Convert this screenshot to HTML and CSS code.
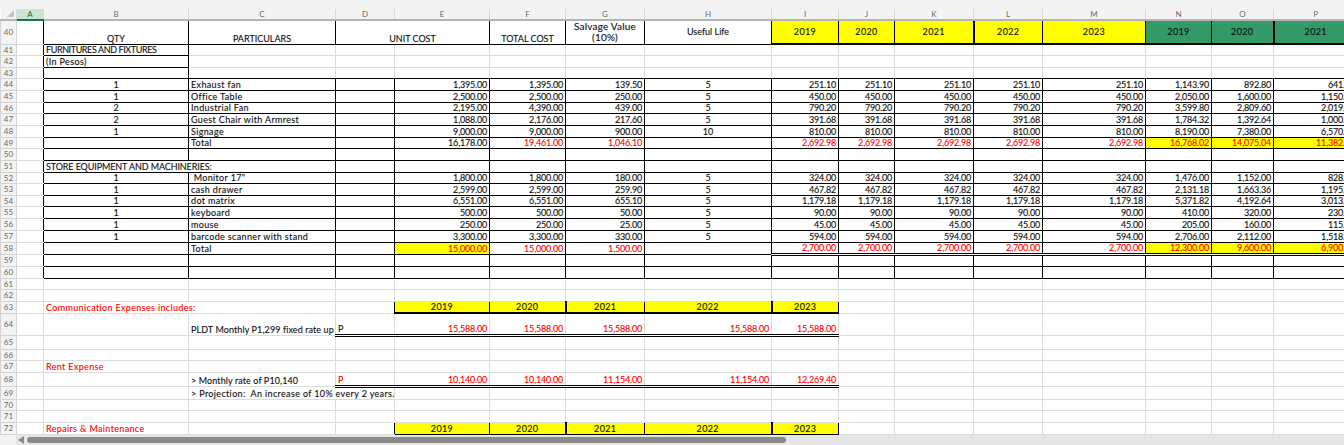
FILE: index.html
```html
<!DOCTYPE html>
<html lang="en">
<head>
    <meta charset="UTF-8">
    <title>Depreciation Schedule</title>
    <link rel="stylesheet" href="styles.css">
</head>
<body>
<div class="sheet">
    <div class="strip"></div>
    <div class="grid-wrap">
        <table class="grid">
            <colgroup>
                <col class="c-rh"><col class="c-a"><col class="c-b"><col class="c-c"><col class="c-d"><col class="c-e"><col class="c-f"><col class="c-g"><col class="c-h"><col class="c-i"><col class="c-j"><col class="c-k"><col class="c-l"><col class="c-m"><col class="c-n"><col class="c-o"><col class="c-p">
            </colgroup>
            <thead>
                <tr class="letters">
                    <th class="corner"><span class="tri"></span></th>
                    <th class="sel">A</th><th>B</th><th>C</th><th>D</th><th>E</th><th>F</th><th>G</th><th>H</th><th>I</th><th>J</th><th>K</th><th>L</th><th>M</th><th>N</th><th>O</th><th>P</th>
                </tr>
            </thead>
            <tbody>
                <tr class="h24 edge box head"><th>40</th><td></td><td class="mid">QTY</td><td class="mid">PARTICULARS</td><td class="mid" colspan="2">UNIT COST</td><td class="mid">TOTAL COST</td><td class="mid top">Salvage Value<br>(10%)</td><td class="mid cen">Useful Life</td><td class="yr yel">2019</td><td class="yr yel">2020</td><td class="yr yel">2021</td><td class="yr yel tl">2022</td><td class="yr yel">2023</td><td class="yr grn">2019</td><td class="yr grn">2020</td><td class="yr grn tl">2021</td></tr>
                <tr class="h11 edge"><th>41</th><td></td><td class="blk tight">FURNITURES AND FIXTURES</td><td></td><td></td><td></td><td></td><td></td><td></td><td></td><td></td><td></td><td></td><td></td><td></td><td></td><td></td></tr>
                <tr class="h12 edge"><th>42</th><td></td><td class="blk">(In Pesos)</td><td></td><td></td><td></td><td></td><td></td><td></td><td></td><td></td><td></td><td></td><td></td><td></td><td></td><td></td></tr>
                <tr class="h11 edge base"><th>43</th><td></td><td class="blk"></td><td></td><td></td><td></td><td></td><td></td><td></td><td></td><td></td><td></td><td></td><td></td><td></td><td></td><td></td></tr>
                <tr class="h12 edge box"><th>44</th><td></td><td class="mid">1</td><td>Exhaust fan</td><td></td><td class="n">1,395.00</td><td class="n">1,395.00</td><td class="n">139.50</td><td class="mid">5</td><td class="n">251.10</td><td class="n">251.10</td><td class="n">251.10</td><td class="n">251.10</td><td class="n">251.10</td><td class="n">1,143.90</td><td class="n">892.80</td><td class="n">641.70</td></tr>
                <tr class="h12 edge box"><th>45</th><td></td><td class="mid">1</td><td>Office Table</td><td></td><td class="n">2,500.00</td><td class="n">2,500.00</td><td class="n">250.00</td><td class="mid">5</td><td class="n">450.00</td><td class="n">450.00</td><td class="n">450.00</td><td class="n">450.00</td><td class="n">450.00</td><td class="n">2,050.00</td><td class="n">1,600.00</td><td class="n">1,150.00</td></tr>
                <tr class="h11 edge box"><th>46</th><td></td><td class="mid">2</td><td>Industrial Fan</td><td></td><td class="n">2,195.00</td><td class="n">4,390.00</td><td class="n">439.00</td><td class="mid">5</td><td class="n">790.20</td><td class="n">790.20</td><td class="n">790.20</td><td class="n">790.20</td><td class="n">790.20</td><td class="n">3,599.80</td><td class="n">2,809.60</td><td class="n">2,019.40</td></tr>
                <tr class="h12 edge box"><th>47</th><td></td><td class="mid">2</td><td>Guest Chair with Armrest</td><td></td><td class="n">1,088.00</td><td class="n">2,176.00</td><td class="n">217.60</td><td class="mid">5</td><td class="n">391.68</td><td class="n">391.68</td><td class="n">391.68</td><td class="n">391.68</td><td class="n">391.68</td><td class="n">1,784.32</td><td class="n">1,392.64</td><td class="n">1,000.96</td></tr>
                <tr class="h12 edge box"><th>48</th><td></td><td class="mid">1</td><td>Signage</td><td></td><td class="n">9,000.00</td><td class="n">9,000.00</td><td class="n">900.00</td><td class="mid">10</td><td class="n">810.00</td><td class="n">810.00</td><td class="n">810.00</td><td class="n">810.00</td><td class="n">810.00</td><td class="n">8,190.00</td><td class="n">7,380.00</td><td class="n">6,570.00</td></tr>
                <tr class="h11 edge box"><th>49</th><td></td><td></td><td>Total</td><td></td><td class="n">16,178.00</td><td class="n red">19,461.00</td><td class="n red">1,046.10</td><td></td><td class="n red">2,692.98</td><td class="n red">2,692.98</td><td class="n red">2,692.98</td><td class="n red">2,692.98</td><td class="n red">2,692.98</td><td class="n red yel">16,768.02</td><td class="n red yel">14,075.04</td><td class="n red yel">11,382.06</td></tr>
                <tr class="h12 edge box"><th>50</th><td></td><td></td><td></td><td></td><td></td><td></td><td></td><td></td><td></td><td></td><td></td><td></td><td></td><td></td><td></td><td></td></tr>
                <tr class="h12 edge box"><th>51</th><td></td><td class="caps" colspan="2">STORE EQUIPMENT AND MACHINERIES:</td><td></td><td></td><td></td><td></td><td></td><td></td><td></td><td></td><td></td><td></td><td></td><td></td><td></td></tr>
                <tr class="h11 edge box"><th>52</th><td></td><td class="mid">1</td><td>&nbsp;Monitor 17"</td><td></td><td class="n">1,800.00</td><td class="n">1,800.00</td><td class="n">180.00</td><td class="mid">5</td><td class="n">324.00</td><td class="n">324.00</td><td class="n">324.00</td><td class="n">324.00</td><td class="n">324.00</td><td class="n">1,476.00</td><td class="n">1,152.00</td><td class="n">828.00</td></tr>
                <tr class="h12 edge box"><th>53</th><td></td><td class="mid">1</td><td>cash drawer</td><td></td><td class="n">2,599.00</td><td class="n">2,599.00</td><td class="n">259.90</td><td class="mid">5</td><td class="n">467.82</td><td class="n">467.82</td><td class="n">467.82</td><td class="n">467.82</td><td class="n">467.82</td><td class="n">2,131.18</td><td class="n">1,663.36</td><td class="n">1,195.54</td></tr>
                <tr class="h11 edge box"><th>54</th><td></td><td class="mid">1</td><td>dot matrix</td><td></td><td class="n">6,551.00</td><td class="n">6,551.00</td><td class="n">655.10</td><td class="mid">5</td><td class="n">1,179.18</td><td class="n">1,179.18</td><td class="n">1,179.18</td><td class="n">1,179.18</td><td class="n">1,179.18</td><td class="n">5,371.82</td><td class="n">4,192.64</td><td class="n">3,013.46</td></tr>
                <tr class="h12 edge box"><th>55</th><td></td><td class="mid">1</td><td>keyboard</td><td></td><td class="n">500.00</td><td class="n">500.00</td><td class="n">50.00</td><td class="mid">5</td><td class="n">90.00</td><td class="n">90.00</td><td class="n">90.00</td><td class="n">90.00</td><td class="n">90.00</td><td class="n">410.00</td><td class="n">320.00</td><td class="n">230.00</td></tr>
                <tr class="h12 edge box"><th>56</th><td></td><td class="mid">1</td><td>mouse</td><td></td><td class="n">250.00</td><td class="n">250.00</td><td class="n">25.00</td><td class="mid">5</td><td class="n">45.00</td><td class="n">45.00</td><td class="n">45.00</td><td class="n">45.00</td><td class="n">45.00</td><td class="n">205.00</td><td class="n">160.00</td><td class="n">115.00</td></tr>
                <tr class="h12 edge box"><th>57</th><td></td><td class="mid">1</td><td>barcode scanner with stand</td><td></td><td class="n">3,300.00</td><td class="n">3,300.00</td><td class="n">330.00</td><td class="mid">5</td><td class="n">594.00</td><td class="n">594.00</td><td class="n">594.00</td><td class="n">594.00</td><td class="n">594.00</td><td class="n">2,706.00</td><td class="n">2,112.00</td><td class="n">1,518.00</td></tr>
                <tr class="h11 edge box"><th>58</th><td></td><td></td><td>Total</td><td></td><td class="n red yel">15,000.00</td><td class="n red">15,000.00</td><td class="n red">1,500.00</td><td></td><td class="n red dbl">2,700.00</td><td class="n red dbl">2,700.00</td><td class="n red dbl">2,700.00</td><td class="n red dbl">2,700.00</td><td class="n red dbl">2,700.00</td><td class="n red yel dbl">12,300.00</td><td class="n red yel dbl">9,600.00</td><td class="n red yel dbl">6,900.00</td></tr>
                <tr class="h12 edge box"><th>59</th><td></td><td></td><td></td><td></td><td></td><td></td><td></td><td></td><td></td><td></td><td></td><td></td><td></td><td></td><td></td><td></td></tr>
                <tr class="h12 edge box"><th>60</th><td></td><td></td><td></td><td></td><td></td><td></td><td></td><td></td><td></td><td></td><td></td><td></td><td></td><td></td><td></td><td></td></tr>
                <tr class="h11"><th>61</th><td></td><td></td><td></td><td></td><td></td><td></td><td></td><td></td><td></td><td></td><td></td><td></td><td></td><td></td><td></td><td></td></tr>
                <tr class="h12"><th>62</th><td></td><td></td><td></td><td></td><td></td><td></td><td></td><td></td><td></td><td></td><td></td><td></td><td></td><td></td><td></td><td></td></tr>
                <tr class="h12"><th>63</th><td></td><td class="red" colspan="2">Communication Expenses includes:</td><td class="rb"></td><td class="tab yel">2019</td><td class="tab yel">2020</td><td class="tab yel tl">2021</td><td class="tab yel">2022</td><td class="tab yel tl">2023</td><td></td><td></td><td></td><td></td><td></td><td></td><td></td></tr>
                <tr class="h22"><th>64</th><td></td><td></td><td class="snug">PLDT Monthly P1,299 fixed rate up</td><td class="dbl">P</td><td class="n red dbl">15,588.00</td><td class="n red dbl">15,588.00</td><td class="n red dbl">15,588.00</td><td class="n red dbl">15,588.00</td><td class="n red dbl">15,588.00</td><td></td><td></td><td></td><td></td><td></td><td></td><td></td></tr>
                <tr class="h14"><th>65</th><td></td><td></td><td></td><td></td><td></td><td></td><td></td><td></td><td></td><td></td><td></td><td></td><td></td><td></td><td></td><td></td></tr>
                <tr class="h11"><th>66</th><td></td><td></td><td></td><td></td><td></td><td></td><td></td><td></td><td></td><td></td><td></td><td></td><td></td><td></td><td></td><td></td></tr>
                <tr class="h12"><th>67</th><td></td><td class="red">Rent Expense</td><td></td><td></td><td></td><td></td><td></td><td></td><td></td><td></td><td></td><td></td><td></td><td></td><td></td><td></td></tr>
                <tr class="h14"><th>68</th><td></td><td></td><td class="snug">&gt; Monthly rate of P10,140</td><td class="red dbl">P</td><td class="n red dbl">10,140.00</td><td class="n red dbl">10,140.00</td><td class="n red dbl">11,154.00</td><td class="n red dbl">11,154.00</td><td class="n red dbl">12,269.40</td><td></td><td></td><td></td><td></td><td></td><td></td><td></td></tr>
                <tr class="h13"><th>69</th><td></td><td></td><td colspan="2">&gt; Projection:&nbsp; An increase of 10% every 2 years.</td><td></td><td></td><td></td><td></td><td></td><td></td><td></td><td></td><td></td><td></td><td></td><td></td></tr>
                <tr class="h11"><th>70</th><td></td><td></td><td></td><td></td><td></td><td></td><td></td><td></td><td></td><td></td><td></td><td></td><td></td><td></td><td></td><td></td></tr>
                <tr class="h12"><th>71</th><td></td><td></td><td></td><td></td><td></td><td></td><td></td><td></td><td></td><td></td><td></td><td></td><td></td><td></td><td></td><td></td></tr>
                <tr class="h12"><th>72</th><td></td><td class="red">Repairs &amp; Maintenance</td><td></td><td class="rb"></td><td class="tab last yel">2019</td><td class="tab last yel">2020</td><td class="tab last yel tl">2021</td><td class="tab last yel">2022</td><td class="tab last yel tl">2023</td><td></td><td></td><td></td><td></td><td></td><td></td><td></td></tr>
            </tbody>
        </table>
    </div>
    <div class="hscroll">
        <div class="hscroll-gap"></div>
        <div class="hscroll-track">
            <span class="hscroll-arrow"></span>
            <span class="hscroll-thumb"></span>
        </div>
    </div>
</div>
</body>
</html>
```

FILE: styles.css
```css
html, body {
    margin: 0;
    height: 100%;
    overflow: hidden;
    background: #fff;
}
.sheet {
    display: flex;
    flex-direction: column;
    height: 445px;
    font-family: Lato, "Liberation Sans", sans-serif;
}
.strip {
    height: 9px;
    background: #f3f3f3;
}
.grid-wrap {
    height: 426px;
    overflow: hidden;
}
.grid {
    border-collapse: collapse;
    table-layout: fixed;
    width: 1357px;
    font-size: 9px;
    line-height: 10px;
    color: #111;
}

/* column widths */
.c-rh { width: 16px; }
.c-a { width: 27px; }
.c-b { width: 145px; }
.c-c { width: 147px; }
.c-d { width: 59px; }
.c-e { width: 95px; }
.c-f { width: 76px; }
.c-g { width: 79px; }
.c-h { width: 127px; }
.c-i { width: 67px; }
.c-j { width: 56px; }
.c-k { width: 79px; }
.c-l { width: 69px; }
.c-m { width: 103px; }
.c-n { width: 66px; }
.c-o { width: 62px; }
.c-p { width: 84px; }

/* row heights */
.h11 { height: 11px; }
.h12 { height: 12px; }
.h13 { height: 13px; }
.h14 { height: 14px; }
.h22 { height: 22px; }
.h24 { height: 24px; }

td {
    border: 1px solid #dcdcdc;
    padding: 0 2px;
    white-space: nowrap;
    overflow: hidden;
    vertical-align: bottom;
    letter-spacing: .35px;
    text-shadow: 0 0 1px rgba(0, 0, 0, .25);
}
tbody th {
    background: #f3f3f3;
    border: 1px solid #d4d4d4;
    color: #6a6a6a;
    font-size: 8px;
    font-weight: normal;
    padding: 0;
}

/* column letters */
.letters { height: 11px; }
.letters th {
    background: #f3f3f3;
    border: 0;
    border-left: 1px solid #d8d8d8;
    border-bottom: 2px solid #b4b4b4;
    color: #6a6a6a;
    font-size: 8px;
    font-weight: normal;
    line-height: 8px;
    padding: 0;
}
.letters th.sel {
    background: #c9e4d3;
    border-bottom-color: #217346;
    color: #1f6b42;
}
.letters .corner {
    position: relative;
    border-left: 0;
}
.tri {
    position: absolute;
    right: 2px;
    bottom: 2px;
    border-left: 7px solid transparent;
    border-bottom: 7px solid #c4c4c4;
}

/* black ruled blocks */
.edge td:first-of-type { border-right-color: #000; }
.box td + td { border-color: #000; }
.base td + td { border-bottom-color: #000; }
td.blk { border-color: #000; }
.head td + td { border-bottom-width: 2px; }
.head td.mid { border-bottom-width: 1px; }
.head td.yr { border-bottom-width: 2px; }

td.mid { text-align: center; letter-spacing: 0; }
td.top { vertical-align: top; line-height: 11px; font-size: 10px; letter-spacing: .2px; }
.cen { vertical-align: middle; }
.yr { text-align: center; vertical-align: middle; }
td.n { text-align: right; letter-spacing: -.2px; padding-right: 2px; }
td.tight { letter-spacing: -.4px; }
td.caps { letter-spacing: -.1px; }
td.snug { letter-spacing: .1px; }
td.red { color: #ff0000; text-shadow: 0 0 1px rgba(255, 0, 0, .25); }
.yel { background: #ffff00; }
.grn { background: #339966; }
.tl { border-left-width: 2px !important; }
.rb { border-right-color: #000; }

td.dbl { border-bottom: 3px double #000; }
.tab {
    text-align: center;
    border-left-color: #000;
    border-right-color: #000;
    border-bottom: 2px solid #000;
}
.tab.last { border-bottom-width: 1px; }

/* horizontal scroll bar */
.hscroll {
    display: flex;
    height: 10px;
}
.hscroll-gap {
    width: 16px;
    background: #f3f3f3;
}
.hscroll-track {
    flex: 1;
    display: flex;
    align-items: center;
    gap: 3px;
    padding-left: 2px;
    background: #e6e6e6;
}
.hscroll-arrow {
    border-top: 4px solid transparent;
    border-bottom: 4px solid transparent;
    border-right: 6px solid #8a8a8a;
}
.hscroll-thumb {
    width: 759px;
    height: 6px;
    border-radius: 3px;
    background: #8a8a8a;
}
```
